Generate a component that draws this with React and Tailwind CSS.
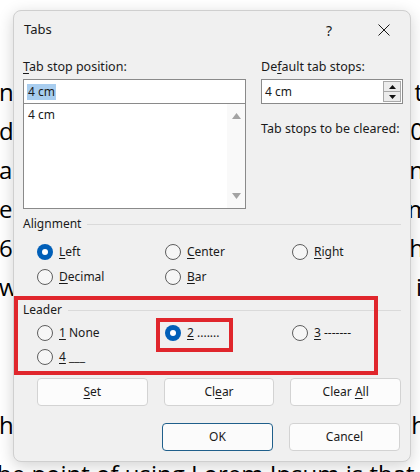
import React from "react";

const docLines = [
  { top: "mt-[72px]", left: "ny", right: "t", mr: "mr-[-3px]" },
  { top: "", left: "d", right: "0", mr: "mr-[-4px]" },
  { top: "", left: "ar", right: "n", mr: "mr-[-4px]" },
  { top: "", left: "ea", right: "m", mr: "mr-[-10px]" },
  { top: "", left: "6", right: "h", mr: "mr-[-4px]" },
  { top: "", left: "w", right: "i", mr: "mr-[-2px]" },
  { top: "mt-[99px]", left: "h", right: ":h", mr: "mr-[-6px]" },
];

const U = ({ children }) => <span className="underline underline-offset-2">{children}</span>;

const Radio = ({ checked, children }) => (
  <div className="flex items-center gap-[6px]">
    {checked ? (
      <span className="w-[16px] h-[16px] rounded-full bg-[#005fb8] flex items-center justify-center">
        <span className="w-[6px] h-[6px] rounded-full bg-white" />
      </span>
    ) : (
      <span className="w-[16px] h-[16px] rounded-full border border-[#5e5e5e] bg-[#f6f6f6]" />
    )}
    <span className="text-[12px] text-[#1a1a1a]">{children}</span>
  </div>
);

const GroupLabel = ({ children, className }) => (
  <div className={`flex items-center gap-[6px] h-4 ${className}`}>
    <span className="text-[12px] text-[#1a1a1a] whitespace-nowrap">{children}</span>
    <span className="flex-1 h-px bg-[#dadada]" />
  </div>
);

const Btn = ({ children, ok }) => (
  <button
    className={`w-[111px] h-[28px] rounded-[4px] text-[12px] text-[#1a1a1a] ${
      ok ? "border border-[#1f5f8b] bg-[#fbfbfb]" : "border border-[#d3d3d3] bg-[#fcfcfc]"
    }`}
  >
    {children}
  </button>
);

export default function App() {
  return (
    <div className="relative w-[420px] h-[472px] overflow-hidden bg-white" style={{ fontFamily: "'Noto Sans', 'Open Sans', sans-serif" }}>
      {/* document behind */}
      <div className="flex flex-col text-[24px] leading-[39px] text-black" style={{ fontFamily: "'Open Sans', sans-serif" }}>
        {docLines.map((l, i) => (
          <div key={i} className={`flex justify-between whitespace-nowrap overflow-hidden ${l.top}`}>
            <span className="ml-[-1px]">{l.left}</span>
            <span className={l.mr}>{l.right}</span>
          </div>
        ))}
        <div className="whitespace-nowrap mt-[10px] ml-[-3px]">he point of using Lorem Ipsum is that</div>
      </div>

      {/* dialog */}
      <div className="absolute left-[13px] top-[10px] w-[398px] h-[452px] rounded-[8px] border border-[#cfcfcf] bg-[#f0f0f0] shadow-[0_4px_16px_rgba(0,0,0,0.18)]">
        <div className="h-[38px] flex items-center pl-[10px] pr-[20px]">
          <span className="text-[13px] text-[#1a1a1a] flex-1">Tabs</span>
          <span className="text-[14px] text-[#1a1a1a] mr-[46px]">?</span>
          <svg width="12" height="12" viewBox="0 0 12 12">
            <path d="M0.5 0.5 L11.5 11.5 M11.5 0.5 L0.5 11.5" stroke="#1a1a1a" strokeWidth="1" />
          </svg>
        </div>

        <div className="px-[9px] pt-[10px]">
          <div className="grid grid-cols-[223px_142px] gap-x-[15px]">
            <div className="flex flex-col">
              <div className="h-4 text-[12.5px] text-[#1a1a1a] leading-4"><U>T</U>ab stop position:</div>
              <div className="mt-[4px] h-[25px] bg-white border border-[#8a8a8a] flex items-center px-[3px]">
                <span className="text-[12px] bg-[#a8cdef] text-[#1a1a1a] leading-[16px] px-px">4 cm</span>
              </div>
              <div className="-mt-px h-[106px] bg-white border border-[#8a8a8a] flex">
                <div className="flex-1 px-[4px] pt-[3px] text-[12px] text-[#1a1a1a] leading-4">4 cm</div>
                <div className="w-[18px] bg-[#f9f9f9] flex flex-col items-center justify-between py-[9px]">
                  <svg width="9" height="6" viewBox="0 0 9 6"><path d="M4.5 0 L9 6 L0 6 Z" fill="#a3a3a3" /></svg>
                  <svg width="9" height="6" viewBox="0 0 9 6"><path d="M0 0 L9 0 L4.5 6 Z" fill="#a3a3a3" /></svg>
                </div>
              </div>
            </div>
            <div className="flex flex-col">
              <div className="h-4 text-[12.5px] text-[#1a1a1a] leading-4">De<U>f</U>ault tab stops:</div>
              <div className="mt-[4px] h-[25px] bg-white border border-[#8a8a8a] flex items-center pl-[3px] pr-px">
                <span className="flex-1 text-[12px] text-[#1a1a1a]">4 cm</span>
                <div className="flex flex-col w-[18px] h-[21px] border border-[#a8a8a8]">
                  <div className="flex-1 bg-[#ececec] flex items-center justify-center border-b border-[#a8a8a8]">
                    <svg width="7" height="4" viewBox="0 0 7 4"><path d="M3.5 0 L7 4 L0 4 Z" fill="#111" /></svg>
                  </div>
                  <div className="flex-1 bg-[#ececec] flex items-center justify-center">
                    <svg width="7" height="4" viewBox="0 0 7 4"><path d="M0 0 L7 0 L3.5 4 Z" fill="#111" /></svg>
                  </div>
                </div>
              </div>
              <div className="mt-[17px] h-4 text-[12.5px] text-[#1a1a1a] leading-4 whitespace-nowrap">Tab stops to be cleared:</div>
            </div>
          </div>

          <GroupLabel className="mt-[7px]">Alignment</GroupLabel>
          <div className="mt-[7px] pl-[14px] grid grid-cols-[128px_127px_1fr] auto-rows-[25px] items-center">
            <Radio checked><U>L</U>eft</Radio>
            <Radio><U>C</U>enter</Radio>
            <Radio><U>R</U>ight</Radio>
            <Radio><U>D</U>ecimal</Radio>
            <Radio><U>B</U>ar</Radio>
          </div>

          <GroupLabel className="mt-[13px]">Leader</GroupLabel>
          <div className="mt-[3px] pl-[14px] grid grid-cols-[128px_127px_1fr] auto-rows-[24px] items-center">
            <Radio><U>1</U> None</Radio>
            <Radio checked><U>2</U> .......</Radio>
            <Radio><U>3</U> -------</Radio>
            <Radio><U>4</U> ___</Radio>
          </div>

          <div className="mt-[9px] pl-[14px] flex gap-[16px]">
            <Btn><U>S</U>et</Btn>
            <Btn>Cl<U>e</U>ar</Btn>
            <Btn>Clear <U>A</U>ll</Btn>
          </div>
          <div className="mt-[17px] flex justify-end gap-[16px] pr-px">
            <Btn ok>OK</Btn>
            <Btn>Cancel</Btn>
          </div>
        </div>

        {/* annotation boxes */}
        <div className="absolute left-0 top-[285px] w-[364px] h-[79px] border-[4px] border-[#e0262c]" />
        <div className="absolute left-[142px] top-[307px] w-[77px] h-[34px] border-[4px] border-[#e0262c]" />
      </div>
    </div>
  );
}
